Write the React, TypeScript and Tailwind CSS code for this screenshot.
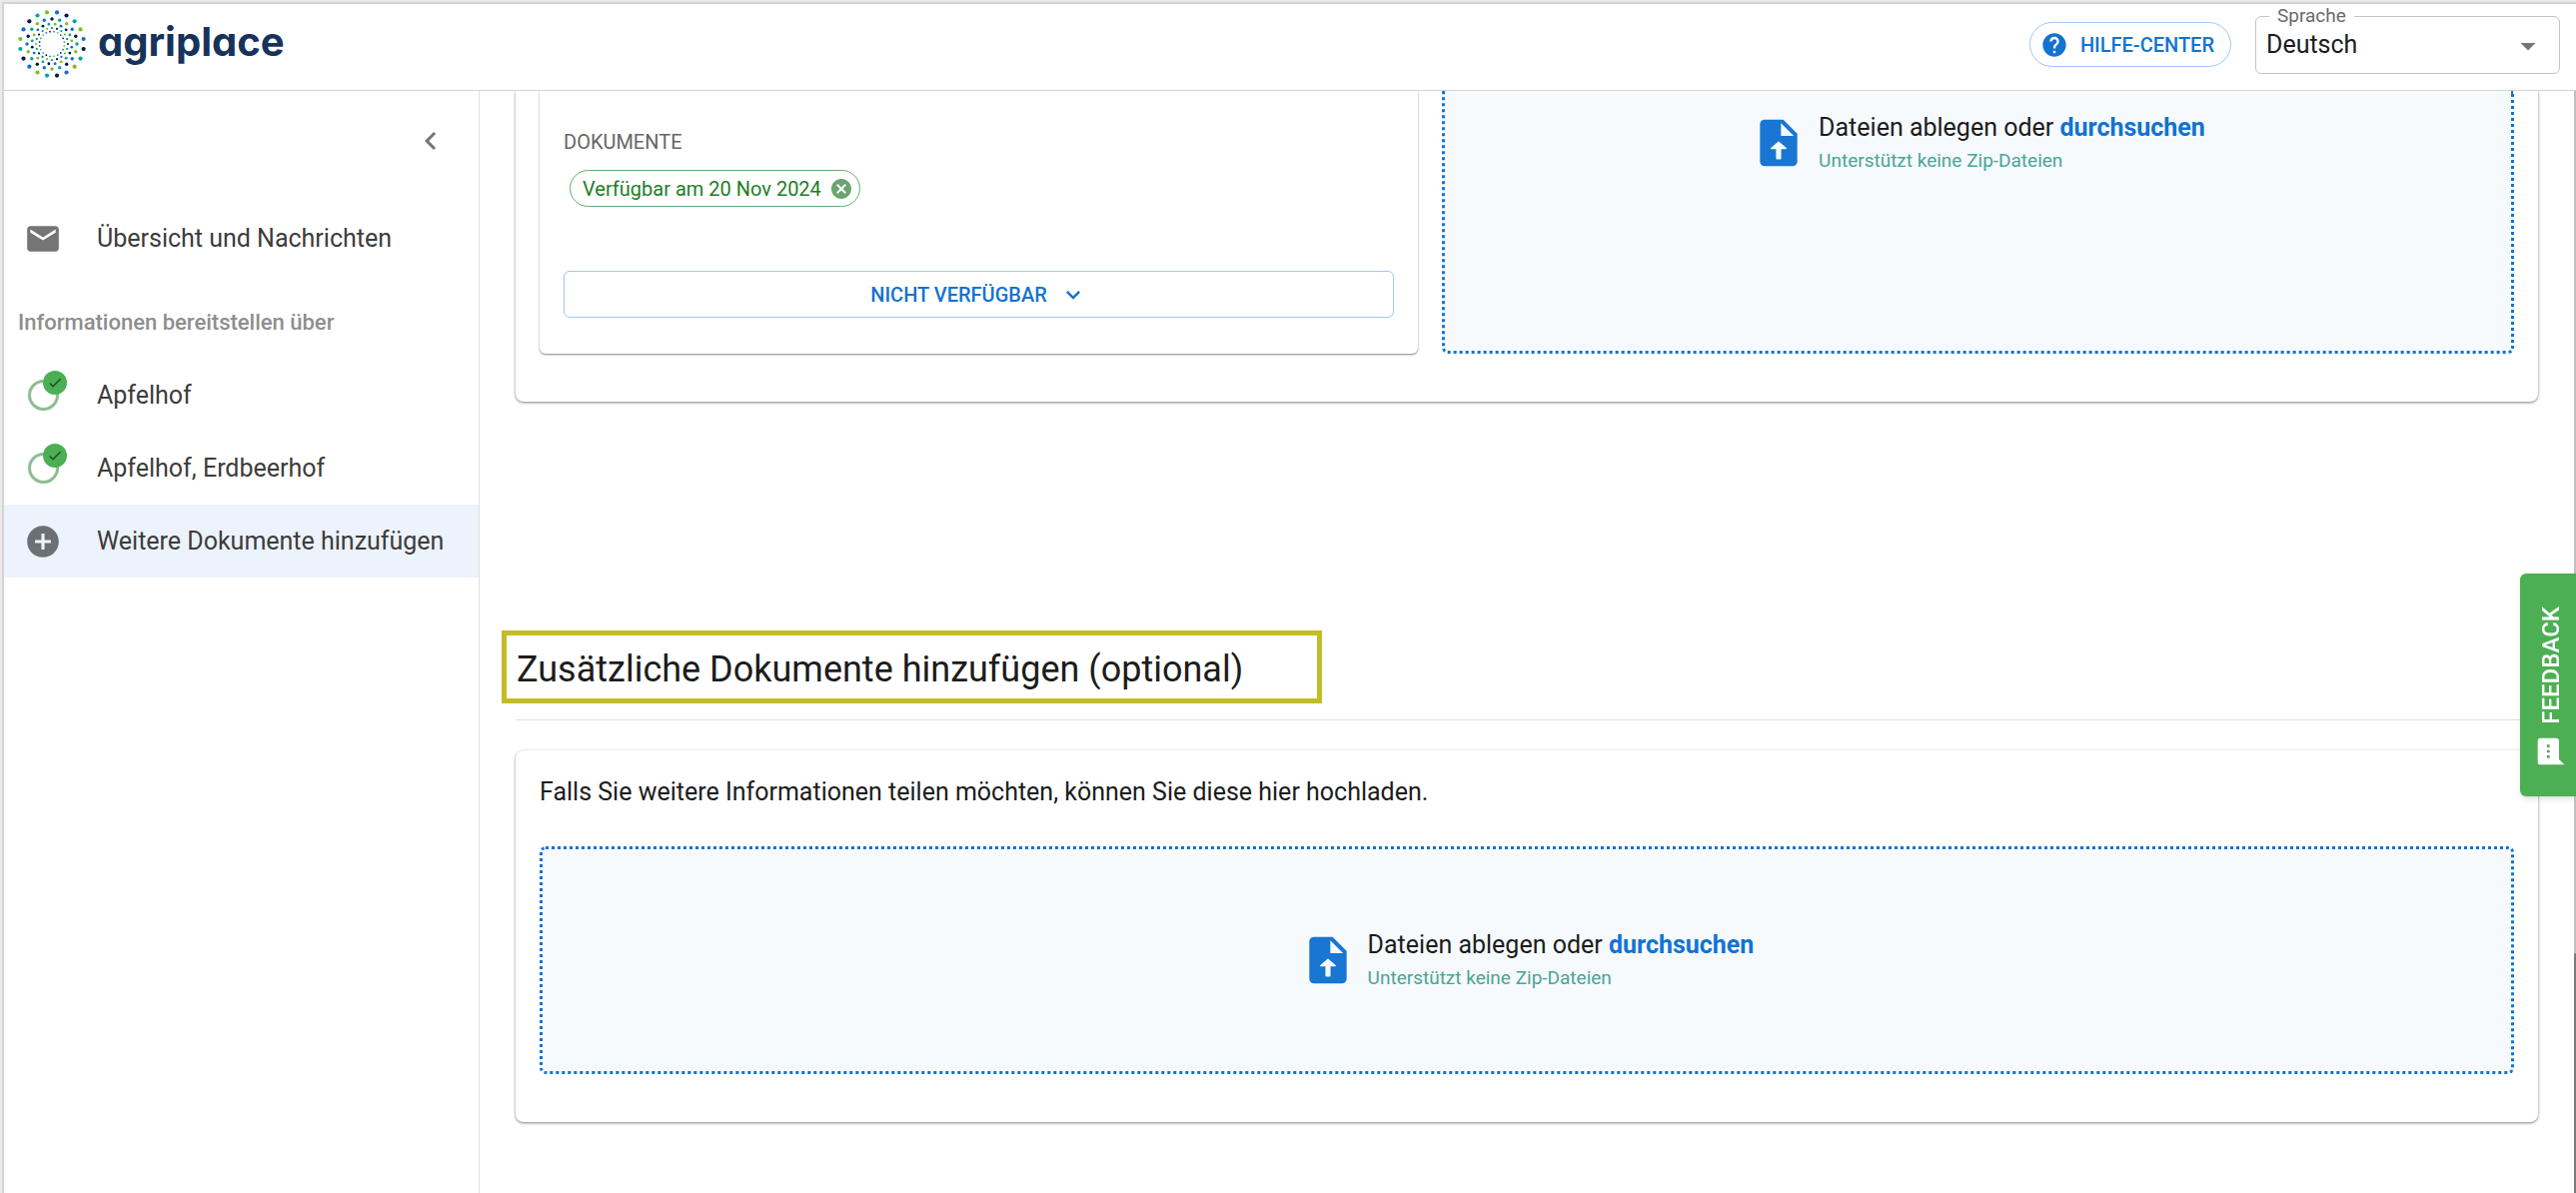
import React from 'react';
import { MdCheck, MdAddCircle, MdArrowDropDown, MdCancel, MdChevronLeft, MdEmail, MdExpandMore, MdHelp, MdSms } from 'react-icons/md';

const DOT_COLORS = ['#0a6fd8', '#06184f', '#00a79b', '#7fbf1f'];

// radius, dot size, angle of the first dot, index of its colour
const RINGS = [
    { radius: 32, dot: 2.1, start: 9, color: 0 },
    { radius: 25, dot: 1.7, start: 0, color: 1 },
    { radius: 20, dot: 1.4, start: 9, color: 3 },
    { radius: 16, dot: 1.1, start: 0, color: 0 },
    { radius: 12.5, dot: 0.9, start: 9, color: 2 },
];

const Logo: React.FC = () => (
    <a href="#" className="flex items-center gap-3 text-[#17335c]">
        <svg viewBox="-34 -34 68 68" className="size-[68px]" aria-hidden="true">
            {RINGS.map(ring =>
                Array.from({ length: 20 }, (_, i) => {
                    const angle = ((ring.start + i * 18) * Math.PI) / 180;
                    return (
                        <circle
                            key={`${ring.radius}-${i}`}
                            cx={ring.radius * Math.sin(angle)}
                            cy={-ring.radius * Math.cos(angle)}
                            r={ring.dot}
                            fill={DOT_COLORS[(ring.color + i) % 4]}
                        />
                    );
                })
            )}
        </svg>
        <span className="pb-1 font-[Inter,sans-serif] text-[40px] leading-10 font-bold [font-feature-settings:'cv11']">agriplace</span>
    </a>
);

const Header: React.FC = () => (
    <header className="flex h-[87px] shrink-0 items-start justify-between border-b border-[#d3d3d3] pl-3.5 pr-4">
        <div className="pt-1.5">
            <Logo />
        </div>
        <div className="flex items-start gap-6 pt-3">
            <button className="mt-1.5 flex h-[45px] items-center gap-3 rounded-full border border-[#a3c7ef] pl-2.5 pr-4 text-xl font-medium text-[#1273d1]">
                <MdHelp className="size-7" />
                HILFE-CENTER
            </button>
            <div className="relative w-[305px]">
                <label htmlFor="language" className="absolute -top-3 left-3.5 bg-white px-2 text-[19px] leading-6 text-[#6b6b6b]">Sprache</label>
                <select id="language" className="h-[58px] w-full appearance-none rounded-md border border-[#c4c4c4] bg-transparent px-2.5 text-[25px] text-[#1c1c1c]">
                    <option>Deutsch</option>
                </select>
                <MdArrowDropDown className="pointer-events-none absolute right-3.5 top-3 size-9 text-[#757575]" />
            </div>
        </div>
    </header>
);

const ProgressIcon: React.FC = () => (
    <span className="relative size-[31px] rounded-full border-3 border-[#8fbd93]">
        <span className="absolute -top-3 left-3 flex size-6 items-center justify-center rounded-full bg-[#4caf54]">
            <MdCheck className="size-4 text-[#1f4a24]" />
        </span>
    </span>
);

const NavItem: React.FC<{ icon: React.ReactNode; label: string; active?: boolean }> = ({ icon, label, active }) => (
    <a href="#" className={`flex h-[73px] items-center pl-5 text-[25px] text-[#3c3c3c] ${active ? 'bg-[#ecf3fc]' : ''}`}>
        <span className="flex w-[73px] items-center pl-1">{icon}</span>
        {label}
    </a>
);

const Sidebar: React.FC = () => (
    <nav className="flex w-[476px] shrink-0 flex-col border-r border-[#e0e0e0]">
        <div className="flex justify-end px-[30px] pb-[43px] pt-8">
            <button aria-label="Menü einklappen">
                <MdChevronLeft className="size-9 text-[#757575]" />
            </button>
        </div>
        <NavItem icon={<MdEmail className="-ml-1 size-[38px] text-[#757575]" />} label="Übersicht und Nachrichten" />
        <p className="pb-7 pl-3.5 pt-10 text-[22px] leading-4 font-medium text-[#8e8e8e]">Informationen bereitstellen über</p>
        <NavItem icon={<ProgressIcon />} label="Apfelhof" />
        <NavItem icon={<ProgressIcon />} label="Apfelhof, Erdbeerhof" />
        <NavItem icon={<MdAddCircle className="-ml-1 size-[38px] text-[#6c6f73]" />} label="Weitere Dokumente hinzufügen" active />
    </nav>
);

const UploadIcon: React.FC = () => (
    <svg viewBox="0 0 24 24" className="size-14 text-[#1976d2]" fill="currentColor" aria-hidden="true">
        <path
            fillRule="evenodd"
            d="M14 2H6a2 2 0 0 0-2 2v16a2 2 0 0 0 2 2h12a2 2 0 0 0 2-2V8l-6-6zm-1 7V3.500L18.500 9H13z"
        />
        <path
            d="M12 11.700 8.900 14.400h2.300v4.400h1.600v-4.400h2.300L12 11.700z"
            className="fill-[#f6fafd] stroke-[#f6fafd]"
            strokeWidth="0.600"
            strokeLinejoin="round"
        />
    </svg>
);

const UploadPrompt: React.FC = () => (
    <div className="flex items-center gap-3">
        <UploadIcon />
        <div className="pt-0.5">
            <p className="text-[25px] leading-[33px] text-[#1c1c1c]">
                Dateien ablegen oder <a href="#" className="font-bold text-[#1273d1]">durchsuchen</a>
            </p>
            <p className="text-[19px] leading-[33px] text-[#4aa596]">Unterstützt keine Zip-Dateien</p>
        </div>
    </div>
);

const DocumentCard: React.FC = () => (
    <section className="flex flex-1 flex-col rounded-b-md px-6 pb-9 pt-[39px] shadow-[0_1px_2px_rgba(0,0,0,0.5)]">
        <h2 className="text-xl leading-6 text-[#666]">DOKUMENTE</h2>
        <div className="ml-1.5 mt-4 flex h-[37px] items-center gap-2 self-start rounded-full border border-[#6aa873] pl-3 pr-1.5 text-xl text-[#1e7d26]">
            Verfügbar am 20 Nov 2024
            <button aria-label="Entfernen">
                <MdCancel className="size-6 text-[#69a56e]" />
            </button>
        </div>
        <button className="mt-16 flex h-[47px] items-center justify-center gap-3 rounded-md border border-[#a3c7ef] text-xl font-medium text-[#1273d1]">
            NICHT VERFÜGBAR
            <MdExpandMore className="size-7" />
        </button>
    </section>
);

const FeedbackButton: React.FC = () => (
    <button className="fixed right-0 top-[574px] flex h-[223px] w-14 flex-col items-center justify-center gap-3 rounded-l-md bg-[#4caf54] pl-1.5 pt-1 text-white shadow-md">
        <span className="rotate-180 text-2xl leading-8 font-medium [writing-mode:vertical-rl]">FEEDBACK</span>
        <MdSms className="size-8 -rotate-90" />
    </button>
);

const App: React.FC = () => (
    <div className="h-screen border-l-2 border-t-2 border-[#ebe9e9] bg-white font-[Roboto,sans-serif]">
        <div className="flex h-full flex-col overflow-hidden border-l-2 border-t-2 border-[#d5d3d3]">
            <Header />
            <div className="flex min-h-0 flex-1">
                <Sidebar />
                <main className="flex-1 overflow-hidden pl-9 pr-9">
                    <div className="flex gap-6 rounded-b-lg px-6 pb-12 shadow-[0_1px_3px_rgba(0,0,0,0.5)]">
                        <DocumentCard />
                        <div className="flex w-[1073px] justify-center rounded-b-md border-3 border-t-0 border-dotted border-[#1273d1] bg-[#f6fafd] pt-[18px]">
                            <div>
                                <UploadPrompt />
                            </div>
                        </div>
                    </div>
                    <div className="mt-[229px] border-b border-[#e0e0e0] pb-4">
                        <h1 className="-ml-3.5 flex h-[73px] w-[821px] items-center border-5 border-[#c3bc26] px-2.5 pt-1 text-4xl text-[#1c1c1c]">
                            Zusätzliche Dokumente hinzufügen (optional)
                        </h1>
                    </div>
                    <section className="mt-[30px] rounded-lg px-6 pb-12 pt-6 shadow-[0_1px_3px_rgba(0,0,0,0.5)]">
                        <p className="text-[25px] leading-9 text-[#1c1c1c]">Falls Sie weitere Informationen teilen möchten, können Sie diese hier hochladen.</p>
                        <div className="mt-9 flex h-[228px] items-center justify-center rounded-md border-3 border-dotted border-[#1273d1] bg-[#f6fafd]">
                            <UploadPrompt />
                        </div>
                    </section>
                </main>
                <div className="flex w-0.5 flex-col bg-[#c1c1c1]">
                    <div className="mt-auto h-60 rounded-t-full bg-[#7b7b7b]" />
                </div>
            </div>
        </div>
        <FeedbackButton />
    </div>
);

export default App;
